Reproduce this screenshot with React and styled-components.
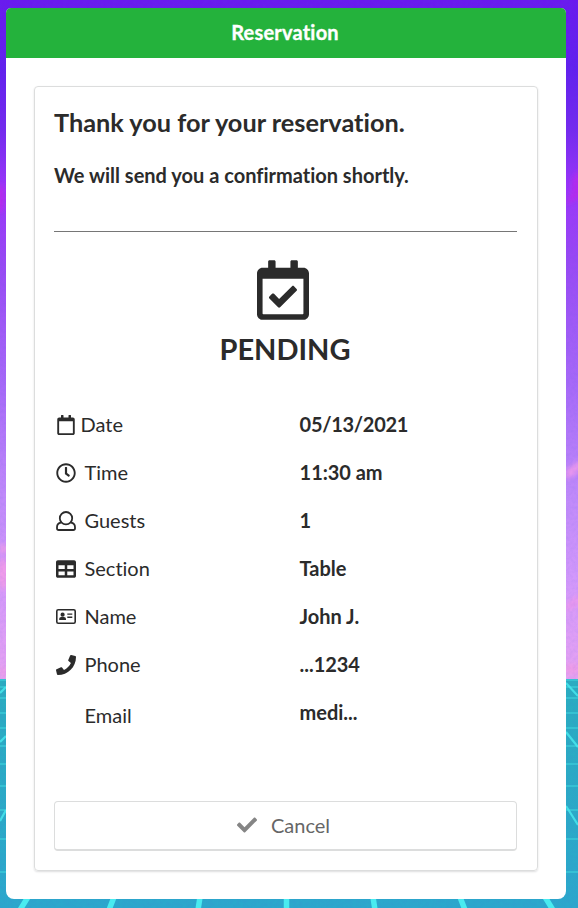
import React from "react";
import styled, { createGlobalStyle } from "styled-components";
import {
  FaRegCalendarCheck,
  FaRegCalendar,
  FaRegClock,
  FaTable,
  FaPhone,
  FaCheck,
} from "react-icons/fa";

const GlobalStyle = createGlobalStyle`
  * { box-sizing: border-box; }
  body {
    margin: 0;
    font-family: Lato, "Open Sans", sans-serif;
    font-variant-ligatures: none;
    color: #2b2b2b;
  }
`;

const Page = styled.div`
  position: relative;
  width: 578px;
  height: 908px;
  padding: 8px 12px 9px 6px;
  overflow: hidden;
`;

const Backdrop = styled.svg`
  position: absolute;
  inset: 0;
  z-index: -1;
`;

const Panel = styled.main`
  height: 891px;
  display: flex;
  flex-direction: column;
  background: #fff;
  border-radius: 5px 5px 8px 8px;
  overflow: hidden;
`;

const PanelHeader = styled.header`
  flex: 0 0 50px;
  background: #24b23c;
  color: #fff;
  font-size: 20px;
  font-weight: 700;
  line-height: 49px;
  text-align: center;
  letter-spacing: 0.2px;
  padding-right: 2px;
  -webkit-text-stroke: 0.35px #fff;
`;

const Card = styled.section`
  flex: 1;
  display: flex;
  flex-direction: column;
  margin: 28px;
  padding: 18px 20px 19px 19px;
  border: 1px solid #dcdddd;
  border-radius: 4px;
  box-shadow: 0 1px 2px rgba(34, 36, 38, 0.15);
`;

const Title = styled.h1`
  margin: 0;
  font-size: 25.3px;
  line-height: 34px;
`;

const Subtitle = styled.h2`
  margin: 22px 0 0;
  font-size: 20px;
  line-height: 28px;
`;

const Divider = styled.hr`
  width: 100%;
  margin: 42px 0 0;
  border: 0;
  border-top: 1px solid #767676;
`;

const Status = styled.div`
  display: flex;
  flex-direction: column;
  align-items: center;
  margin-top: 28px;
  padding-right: 5px;

  svg { width: 52px; height: 60px; margin-bottom: 9px; }
`;

const StatusText = styled.strong`
  padding-left: 4px;
  font-size: 29px;
  line-height: 40px;
`;

const Details = styled.dl`
  display: grid;
  grid-auto-rows: 48px;
  margin: 31px 0 0;
`;

const Row = styled.div`
  display: grid;
  grid-template-columns: 245px 1fr;
  align-items: center;
  font-size: 20px;
`;

const Label = styled.dt`
  display: flex;
  align-items: center;
  gap: ${(p) => (p.$tight ? "4px" : "8px")};
  padding-top: ${(p) => (p.$lowered ? "6px" : "0")};
  padding-left: 0.5px;
`;

const IconSlot = styled.span`
  display: flex;
  justify-content: center;
  width: 22px;
  padding-top: 1px;

  svg { display: block; flex: none; width: ${(p) => p.$width}px; height: 20px; }
`;

const Value = styled.dd`
  margin: 0;
  padding-left: 0.6px;
  font-weight: 700;
  letter-spacing: ${(p) => (p.$compact ? "-0.3px" : "-0.05px")};
`;

const CancelButton = styled.button`
  display: flex;
  align-items: center;
  justify-content: center;
  gap: 14px;
  height: 50px;
  margin-top: auto;
  padding: 0 4px 1px 0;
  background: #fff;
  border: 1px solid #dcdddd;
  border-bottom-width: 2px;
  border-radius: 4px;
  color: #666;
  font: 400 20px Lato, sans-serif;

  svg { color: #858585; }
`;

const GuestIcon = () => (
  <svg viewBox="0 0 20 20" fill="none" stroke="currentColor" strokeWidth="1.8">
    <path d="M5 11.6C2.6 11.9 1 13.8 1 16.3v.9c0 1 .8 1.8 1.8 1.8h14.4c1 0 1.8-.8 1.8-1.8v-.9c0-2.5-1.6-4.4-4-4.7" />
    <circle cx="10" cy="7.2" r="6.2" />
  </svg>
);

const AddressCardIcon = () => (
  <svg viewBox="0 0 20 20" fill="currentColor">
    <rect x="0.8" y="2.8" width="18.4" height="13.4" rx="1.4" fill="none" stroke="currentColor" strokeWidth="1.6" />
    <circle cx="6.6" cy="7.7" r="2.1" />
    <path d="M3.2 12.9v-.7c0-1.2.9-2.1 2.1-2.1h2.6c1.2 0 2.1.9 2.1 2.1v.7zM11.3 6.6h5v1.2h-5zM11.3 9.6h5v1.3h-5z" />
  </svg>
);

const details = [
  { label: "Date", value: "05/13/2021", icon: FaRegCalendar, tight: true, compact: true, width: 18 },
  { label: "Time", value: "11:30 am", icon: FaRegClock },
  { label: "Guests", value: "1", icon: GuestIcon },
  { label: "Section", value: "Table", icon: FaTable },
  { label: "Name", value: "John J.", icon: AddressCardIcon },
  { label: "Phone", value: "...1234", icon: FaPhone },
  { label: "Email", value: "medi...", lowered: true },
];

const horizontals = [680, 687, 698, 713, 728, 746, 764, 786, 810, 839, 872];

const Wallpaper = () => (
  <Backdrop width="578" height="908" viewBox="0 0 578 908" aria-hidden="true">
    <defs>
      <linearGradient id="sky" gradientUnits="userSpaceOnUse" x1="0" y1="0" x2="0" y2="679">
        <stop offset="0" stopColor="#6a1aee" />
        <stop offset="0.1" stopColor="#6220ee" />
        <stop offset="0.19" stopColor="#742aee" />
        <stop offset="0.28" stopColor="#9c35fa" />
        <stop offset="0.38" stopColor="#9848f4" />
        <stop offset="0.57" stopColor="#a76af8" />
        <stop offset="0.73" stopColor="#c08afa" />
        <stop offset="0.85" stopColor="#d298fb" />
        <stop offset="1" stopColor="#e6a2f2" />
      </linearGradient>
      <linearGradient id="floor" x1="0" y1="0" x2="0" y2="1">
        <stop offset="0" stopColor="#2aadc0" />
        <stop offset="1" stopColor="#2ba8cc" />
      </linearGradient>
      <filter id="soft" x="-100%" y="-100%" width="300%" height="300%">
        <feGaussianBlur stdDeviation="2.5" />
      </filter>
      <filter id="grain">
        <feTurbulence type="fractalNoise" baseFrequency="0.3" numOctaves="2" />
        <feColorMatrix values="0 0 0 0 0.1  0 0 0 0 0.1  0 0 0 0 0.7  0.9 0 0 0 -0.3" />
      </filter>
    </defs>
    <rect width="578" height="679" fill="url(#sky)" />
    <g filter="url(#soft)">
      <ellipse cx="0" cy="198" rx="5" ry="14" fill="#b52bed" />
      <path d="M580 168l-8 12v12l-7 12 15-6z" fill="#b52bed" />
      <path d="M580 460l-14 10v10l14-9zM580 594l-14 10v8l14-8z" fill="#eb98ee" />
      <ellipse cx="3" cy="574" rx="6" ry="16" fill="#f09bea" />
      <path d="M0 545h7v8H0zM0 668h7v8H0zM565 664h14v10h-14z" fill="#ee9ce8" />
    </g>
    <rect y="679" width="578" height="229" fill="url(#floor)" />
    <rect width="578" height="908" filter="url(#grain)" opacity="0.18" />
    <g stroke="#3dd2dd" strokeWidth="2" opacity="0.6">
      {horizontals.map((y) => (
        <path key={y} d={`M0 ${y}h578`} />
      ))}
    </g>
    <g stroke="#49ebf0" strokeWidth="2.2" opacity="0.8">
      <path d="M0 693l6-6M0 742l6-6M0 821l6-11M566 683l12 13M566 732l12 15M566 806l12 19" />
    </g>
    <g stroke="#49ebf0" strokeWidth="5.5">
      <path d="M28 897l-8 13M114 897l-5 13M200 897l-2 13M286.5 897v13M373 897l2 13M460 897l5 13M545 897l8 13" />
    </g>
  </Backdrop>
);

export default function App() {
  return (
    <Page>
      <GlobalStyle />
      <Wallpaper />
      <Panel>
        <PanelHeader>Reservation</PanelHeader>
        <Card>
          <Title>Thank you for your reservation.</Title>
          <Subtitle>We will send you a confirmation shortly.</Subtitle>
          <Divider />
          <Status>
            <FaRegCalendarCheck />
            <StatusText>PENDING</StatusText>
          </Status>
          <Details>
            {details.map(({ label, value, icon: Icon, tight, compact, lowered, width = 20 }) => (
              <Row key={label}>
                <Label $tight={tight} $lowered={lowered}>
                  <IconSlot $width={width}>{Icon && <Icon />}</IconSlot>
                  {label}
                </Label>
                <Value $compact={compact}>{value}</Value>
              </Row>
            ))}
          </Details>
          <CancelButton type="button">
            <FaCheck />
            Cancel
          </CancelButton>
        </Card>
      </Panel>
    </Page>
  );
}
